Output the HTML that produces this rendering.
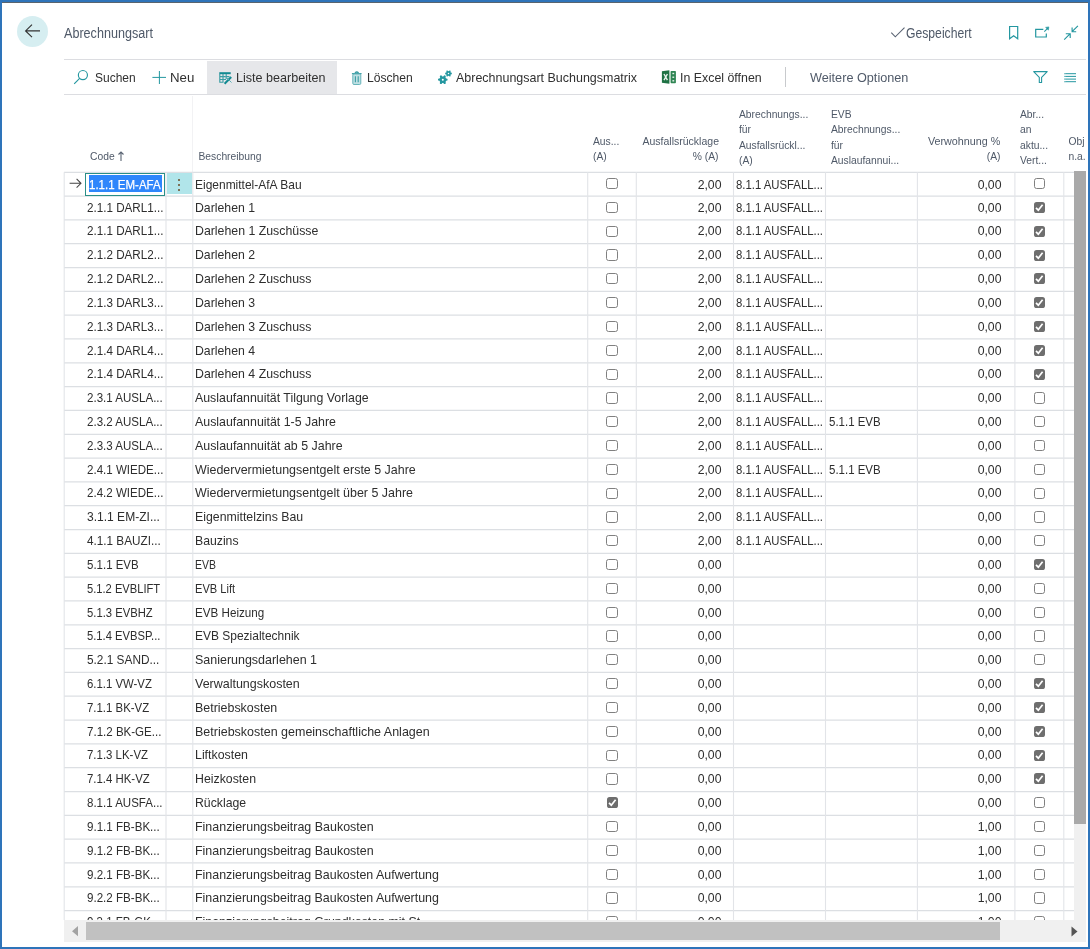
<!DOCTYPE html>
<html><head><meta charset="utf-8"><title>Abrechnungsart</title>
<style>
*{box-sizing:border-box;margin:0;padding:0}
html,body{width:1090px;height:949px;overflow:hidden;background:#fff;font-family:"Liberation Sans",sans-serif;}
.abs{position:absolute}
.page{position:absolute;left:0;top:0;width:1090px;height:949px;overflow:hidden;will-change:transform;background:#fff}
.frame{position:absolute;left:0;top:0;width:1090px;height:949px;border-style:solid;border-color:#2e74ba;border-width:2px 2.4px 2px 2px}
.frametop{position:absolute;left:2px;top:2px;width:1086px;height:1px;background:#22303e;opacity:.75}
.back{position:absolute;left:17px;top:15.7px;width:31.2px;height:31.2px;border-radius:50%;background:#d6eef1}
.title{position:absolute;color:#4f5968;line-height:16px;white-space:nowrap;transform-origin:left center}
.tbline{position:absolute;left:64px;width:1022px;height:1.3px;background:#dcdde1}
.tbtxt{position:absolute;color:#303030;line-height:16px;white-space:nowrap;transform-origin:left center}
.grid{position:absolute;left:0;top:0;width:1074px;height:920px;overflow:hidden}
.t{position:absolute;line-height:23.8px;color:#2e2e2e;white-space:nowrap;transform-origin:left center}
.cb{position:absolute;width:11.2px;height:11.2px;border:1.35px solid #808080;border-radius:2.6px;background:#fff}
.cb.on{width:11px;height:11px;background:#6e6e6e;border:none}
.cb svg{position:absolute;left:0;top:0}
.sel{position:absolute;left:85.3px;width:80px;height:22.8px;border:1.6px solid #2a8f88;background:#fff}
.selbg{position:absolute;left:88.6px;width:73.5px;height:17.4px;background:#2f86fb}
.dots{position:absolute;left:166.6px;width:25.8px;height:21.3px;background:#b1e5ea}
.dots i{position:absolute;left:11.7px;width:1.6px;height:1.6px;background:#7d7257}
.hd{position:absolute;font-size:10.3px;line-height:15.1px;color:#4f5968;white-space:nowrap}
.vsb{position:absolute;left:1074px;top:171.2px;width:11.8px;height:749px;background:#f0f0f0}
.vthumb{position:absolute;left:1074px;top:171.2px;width:11.8px;height:652.4px;background:#a9a9a9}
.hsb{position:absolute;left:63.8px;top:920.2px;width:1022px;height:21.9px;background:#f0f0f0}
.hthumb{position:absolute;left:86.3px;top:922px;width:914px;height:18.2px;background:#c1c1c1}
</style></head><body><div class="page">
<div class="back"></div>
<div class="tbline" style="top:59.2px"></div>
<div class="abs" style="left:206.8px;top:60.6px;width:130.4px;height:33.4px;background:#e6e7ea"></div>
<div class="tbline" style="top:93.9px"></div>
<div class="abs" style="left:785.2px;top:67.4px;width:1.2px;height:19.8px;background:#c8cacd"></div>
<div class="tbtxt" style="left:95.35px;top:69.90px;font-size:13.6px;transform:scaleX(0.8829);">Suchen</div>
<div class="tbtxt" style="left:170.01px;top:69.90px;font-size:13.6px;transform:scaleX(0.9769);">Neu</div>
<div class="tbtxt" style="left:235.97px;top:69.90px;font-size:13.6px;transform:scaleX(0.9242);">Liste bearbeiten</div>
<div class="tbtxt" style="left:367.30px;top:69.90px;font-size:13.6px;transform:scaleX(0.8924);">Löschen</div>
<div class="tbtxt" style="left:456.28px;top:69.90px;font-size:13.6px;transform:scaleX(0.9177);">Abrechnungsart Buchungsmatrix</div>
<div class="tbtxt" style="left:679.86px;top:69.90px;font-size:13.6px;transform:scaleX(0.9109);">In Excel öffnen</div>
<div class="tbtxt" style="left:809.74px;top:69.90px;font-size:13.6px;transform:scaleX(0.9324);color:#505a69">Weitere Optionen</div>
<div class="title" style="left:63.58px;top:25.60px;font-size:13.8px;transform:scaleX(0.9126);">Abrechnungsart</div>
<div class="title" style="left:906.39px;top:25.50px;font-size:13.8px;transform:scaleX(0.8830);">Gespeichert</div>

<div class="hd" style="left:90px;top:148.9px">Code</div>
<svg class="abs" style="left:117px;top:150.6px" width="8" height="11" fill="none"><path d="M4 1 V10 M1.5 3.5 L4 1 L6.5 3.5" stroke="#5a6473" stroke-width="1.1"/></svg>
<div class="hd" style="left:198.5px;top:148.9px">Beschreibung</div>
<div class="hd" style="left:593px;top:134.4px">Aus...<br>(A)</div>
<div class="hd" style="left:618.5px;width:100px;text-align:right;top:134.4px"><span style="display:inline-block;transform:scaleX(1.02);transform-origin:right center">Ausfallsrücklage</span><br>% (A)</div>
<div class="hd" style="left:739px;top:107.4px">Abrechnungs...<br>für<br>Ausfallsrückl...<br>(A)</div>
<div class="hd" style="left:831px;top:107.4px">EVB<br>Abrechnungs...<br>für<br>Auslaufannui...</div>
<div class="hd" style="left:900.5px;width:100px;text-align:right;top:134.4px"><span style="display:inline-block;transform:scaleX(1.045);transform-origin:right center">Verwohnung %</span><br>(A)</div>
<div class="hd" style="left:1020px;top:107.4px">Abr...<br>an<br>aktu...<br>Vert...</div>
<div class="hd" style="left:1068.5px;top:134.4px;width:17.5px;overflow:hidden">Obj<br>n.a.</div>
<div class="abs" style="left:192.2px;top:96.4px;width:1px;height:77px;background:#f2f2f4"></div>

<div class="grid">
<svg class="abs" style="left:0;top:0" width="1074" height="920"><g stroke="#dcdfe3" stroke-width="1.25" shape-rendering="geometricPrecision"><line x1="64" y1="172.26" x2="1074" y2="172.26"/><line x1="64" y1="196.08" x2="1074" y2="196.08"/><line x1="64" y1="219.89" x2="1074" y2="219.89"/><line x1="64" y1="243.71" x2="1074" y2="243.71"/><line x1="64" y1="267.53" x2="1074" y2="267.53"/><line x1="64" y1="291.35" x2="1074" y2="291.35"/><line x1="64" y1="315.16" x2="1074" y2="315.16"/><line x1="64" y1="338.98" x2="1074" y2="338.98"/><line x1="64" y1="362.80" x2="1074" y2="362.80"/><line x1="64" y1="386.61" x2="1074" y2="386.61"/><line x1="64" y1="410.43" x2="1074" y2="410.43"/><line x1="64" y1="434.25" x2="1074" y2="434.25"/><line x1="64" y1="458.06" x2="1074" y2="458.06"/><line x1="64" y1="481.88" x2="1074" y2="481.88"/><line x1="64" y1="505.70" x2="1074" y2="505.70"/><line x1="64" y1="529.51" x2="1074" y2="529.51"/><line x1="64" y1="553.33" x2="1074" y2="553.33"/><line x1="64" y1="577.15" x2="1074" y2="577.15"/><line x1="64" y1="600.97" x2="1074" y2="600.97"/><line x1="64" y1="624.78" x2="1074" y2="624.78"/><line x1="64" y1="648.60" x2="1074" y2="648.60"/><line x1="64" y1="672.42" x2="1074" y2="672.42"/><line x1="64" y1="696.23" x2="1074" y2="696.23"/><line x1="64" y1="720.05" x2="1074" y2="720.05"/><line x1="64" y1="743.87" x2="1074" y2="743.87"/><line x1="64" y1="767.68" x2="1074" y2="767.68"/><line x1="64" y1="791.50" x2="1074" y2="791.50"/><line x1="64" y1="815.32" x2="1074" y2="815.32"/><line x1="64" y1="839.14" x2="1074" y2="839.14"/><line x1="64" y1="862.95" x2="1074" y2="862.95"/><line x1="64" y1="886.77" x2="1074" y2="886.77"/><line x1="64" y1="910.59" x2="1074" y2="910.59"/><line x1="64" y1="934.40" x2="1074" y2="934.40"/></g><g stroke="#e2e4e8" stroke-width="1.1"><line x1="64.2" y1="172.26" x2="64.2" y2="920"/><line x1="166.0" y1="172.26" x2="166.0" y2="920"/><line x1="192.8" y1="172.26" x2="192.8" y2="920"/><line x1="587.7" y1="172.26" x2="587.7" y2="920"/><line x1="636.3" y1="172.26" x2="636.3" y2="920"/><line x1="733.5" y1="172.26" x2="733.5" y2="920"/><line x1="825.5" y1="172.26" x2="825.5" y2="920"/><line x1="917.4" y1="172.26" x2="917.4" y2="920"/><line x1="1014.9" y1="172.26" x2="1014.9" y2="920"/><line x1="1063.8" y1="172.26" x2="1063.8" y2="920"/></g></svg>
<div class="sel" style="top:172.96px"></div>
<div class="selbg" style="top:174.96px"></div>
<div class="t" style="left:89.02px;top:172.86px;font-size:13.6px;transform:scaleX(0.8465);color:#fff;-webkit-text-stroke:0.25px #fff">1.1.1 EM-AFA</div>
<div class="dots" style="top:172.96px"><i style="top:6.3px"></i><i style="top:11.2px"></i><i style="top:16.2px"></i></div>
<div class="t" style="left:195.30px;top:172.86px;font-size:13.6px;transform:scaleX(0.8814);">Eigenmittel-AfA Bau</div>
<div class="cb" style="left:606.40px;top:177.97px"></div>
<div class="t" style="left:694.71px;top:172.86px;width:26.47px;font-size:13.6px;text-align:right;transform-origin:right center;transform:scaleX(0.9004);">2,00</div>
<div class="t" style="left:736.01px;top:172.86px;font-size:13.6px;transform:scaleX(0.8337);">8.1.1 AUSFALL...</div>
<div class="t" style="left:975.01px;top:172.86px;width:26.47px;font-size:13.6px;text-align:right;transform-origin:right center;transform:scaleX(0.9004);">0,00</div>
<div class="cb" style="left:1033.90px;top:177.97px"></div>
<div class="t" style="left:87.01px;top:195.68px;font-size:13.6px;transform:scaleX(0.8570);">2.1.1 DARL1...</div>
<div class="t" style="left:195.30px;top:195.68px;font-size:13.6px;transform:scaleX(0.9027);">Darlehen 1</div>
<div class="cb" style="left:606.40px;top:201.79px"></div>
<div class="t" style="left:694.71px;top:195.68px;width:26.47px;font-size:13.6px;text-align:right;transform-origin:right center;transform:scaleX(0.9004);">2,00</div>
<div class="t" style="left:736.01px;top:195.68px;font-size:13.6px;transform:scaleX(0.8337);">8.1.1 AUSFALL...</div>
<div class="t" style="left:975.01px;top:195.68px;width:26.47px;font-size:13.6px;text-align:right;transform-origin:right center;transform:scaleX(0.9004);">0,00</div>
<div class="cb on" style="left:1034.00px;top:201.89px"><svg width="11" height="11" viewBox="0 0 11 11"><path d="M2 5.9 L4.3 8.2 L8.6 2.8" fill="none" stroke="#fff" stroke-width="1.7"/></svg></div>
<div class="t" style="left:87.01px;top:219.49px;font-size:13.6px;transform:scaleX(0.8570);">2.1.1 DARL1...</div>
<div class="t" style="left:195.30px;top:219.49px;font-size:13.6px;transform:scaleX(0.9068);">Darlehen 1 Zuschüsse</div>
<div class="cb" style="left:606.40px;top:225.60px"></div>
<div class="t" style="left:694.71px;top:219.49px;width:26.47px;font-size:13.6px;text-align:right;transform-origin:right center;transform:scaleX(0.9004);">2,00</div>
<div class="t" style="left:736.01px;top:219.49px;font-size:13.6px;transform:scaleX(0.8337);">8.1.1 AUSFALL...</div>
<div class="t" style="left:975.01px;top:219.49px;width:26.47px;font-size:13.6px;text-align:right;transform-origin:right center;transform:scaleX(0.9004);">0,00</div>
<div class="cb on" style="left:1034.00px;top:225.70px"><svg width="11" height="11" viewBox="0 0 11 11"><path d="M2 5.9 L4.3 8.2 L8.6 2.8" fill="none" stroke="#fff" stroke-width="1.7"/></svg></div>
<div class="t" style="left:87.01px;top:243.31px;font-size:13.6px;transform:scaleX(0.8570);">2.1.2 DARL2...</div>
<div class="t" style="left:195.30px;top:243.31px;font-size:13.6px;transform:scaleX(0.9027);">Darlehen 2</div>
<div class="cb" style="left:606.40px;top:249.42px"></div>
<div class="t" style="left:694.71px;top:243.31px;width:26.47px;font-size:13.6px;text-align:right;transform-origin:right center;transform:scaleX(0.9004);">2,00</div>
<div class="t" style="left:736.01px;top:243.31px;font-size:13.6px;transform:scaleX(0.8337);">8.1.1 AUSFALL...</div>
<div class="t" style="left:975.01px;top:243.31px;width:26.47px;font-size:13.6px;text-align:right;transform-origin:right center;transform:scaleX(0.9004);">0,00</div>
<div class="cb on" style="left:1034.00px;top:249.52px"><svg width="11" height="11" viewBox="0 0 11 11"><path d="M2 5.9 L4.3 8.2 L8.6 2.8" fill="none" stroke="#fff" stroke-width="1.7"/></svg></div>
<div class="t" style="left:87.01px;top:267.13px;font-size:13.6px;transform:scaleX(0.8570);">2.1.2 DARL2...</div>
<div class="t" style="left:195.30px;top:267.13px;font-size:13.6px;transform:scaleX(0.9054);">Darlehen 2 Zuschuss</div>
<div class="cb" style="left:606.40px;top:273.24px"></div>
<div class="t" style="left:694.71px;top:267.13px;width:26.47px;font-size:13.6px;text-align:right;transform-origin:right center;transform:scaleX(0.9004);">2,00</div>
<div class="t" style="left:736.01px;top:267.13px;font-size:13.6px;transform:scaleX(0.8337);">8.1.1 AUSFALL...</div>
<div class="t" style="left:975.01px;top:267.13px;width:26.47px;font-size:13.6px;text-align:right;transform-origin:right center;transform:scaleX(0.9004);">0,00</div>
<div class="cb on" style="left:1034.00px;top:273.34px"><svg width="11" height="11" viewBox="0 0 11 11"><path d="M2 5.9 L4.3 8.2 L8.6 2.8" fill="none" stroke="#fff" stroke-width="1.7"/></svg></div>
<div class="t" style="left:87.01px;top:290.95px;font-size:13.6px;transform:scaleX(0.8570);">2.1.3 DARL3...</div>
<div class="t" style="left:195.30px;top:290.95px;font-size:13.6px;transform:scaleX(0.9027);">Darlehen 3</div>
<div class="cb" style="left:606.40px;top:297.05px"></div>
<div class="t" style="left:694.71px;top:290.95px;width:26.47px;font-size:13.6px;text-align:right;transform-origin:right center;transform:scaleX(0.9004);">2,00</div>
<div class="t" style="left:736.01px;top:290.95px;font-size:13.6px;transform:scaleX(0.8337);">8.1.1 AUSFALL...</div>
<div class="t" style="left:975.01px;top:290.95px;width:26.47px;font-size:13.6px;text-align:right;transform-origin:right center;transform:scaleX(0.9004);">0,00</div>
<div class="cb on" style="left:1034.00px;top:297.15px"><svg width="11" height="11" viewBox="0 0 11 11"><path d="M2 5.9 L4.3 8.2 L8.6 2.8" fill="none" stroke="#fff" stroke-width="1.7"/></svg></div>
<div class="t" style="left:87.01px;top:314.76px;font-size:13.6px;transform:scaleX(0.8570);">2.1.3 DARL3...</div>
<div class="t" style="left:195.30px;top:314.76px;font-size:13.6px;transform:scaleX(0.9054);">Darlehen 3 Zuschuss</div>
<div class="cb" style="left:606.40px;top:320.87px"></div>
<div class="t" style="left:694.71px;top:314.76px;width:26.47px;font-size:13.6px;text-align:right;transform-origin:right center;transform:scaleX(0.9004);">2,00</div>
<div class="t" style="left:736.01px;top:314.76px;font-size:13.6px;transform:scaleX(0.8337);">8.1.1 AUSFALL...</div>
<div class="t" style="left:975.01px;top:314.76px;width:26.47px;font-size:13.6px;text-align:right;transform-origin:right center;transform:scaleX(0.9004);">0,00</div>
<div class="cb on" style="left:1034.00px;top:320.97px"><svg width="11" height="11" viewBox="0 0 11 11"><path d="M2 5.9 L4.3 8.2 L8.6 2.8" fill="none" stroke="#fff" stroke-width="1.7"/></svg></div>
<div class="t" style="left:87.01px;top:338.58px;font-size:13.6px;transform:scaleX(0.8570);">2.1.4 DARL4...</div>
<div class="t" style="left:195.30px;top:338.58px;font-size:13.6px;transform:scaleX(0.9027);">Darlehen 4</div>
<div class="cb" style="left:606.40px;top:344.69px"></div>
<div class="t" style="left:694.71px;top:338.58px;width:26.47px;font-size:13.6px;text-align:right;transform-origin:right center;transform:scaleX(0.9004);">2,00</div>
<div class="t" style="left:736.01px;top:338.58px;font-size:13.6px;transform:scaleX(0.8337);">8.1.1 AUSFALL...</div>
<div class="t" style="left:975.01px;top:338.58px;width:26.47px;font-size:13.6px;text-align:right;transform-origin:right center;transform:scaleX(0.9004);">0,00</div>
<div class="cb on" style="left:1034.00px;top:344.79px"><svg width="11" height="11" viewBox="0 0 11 11"><path d="M2 5.9 L4.3 8.2 L8.6 2.8" fill="none" stroke="#fff" stroke-width="1.7"/></svg></div>
<div class="t" style="left:87.01px;top:362.40px;font-size:13.6px;transform:scaleX(0.8570);">2.1.4 DARL4...</div>
<div class="t" style="left:195.30px;top:362.40px;font-size:13.6px;transform:scaleX(0.9054);">Darlehen 4 Zuschuss</div>
<div class="cb" style="left:606.40px;top:368.50px"></div>
<div class="t" style="left:694.71px;top:362.40px;width:26.47px;font-size:13.6px;text-align:right;transform-origin:right center;transform:scaleX(0.9004);">2,00</div>
<div class="t" style="left:736.01px;top:362.40px;font-size:13.6px;transform:scaleX(0.8337);">8.1.1 AUSFALL...</div>
<div class="t" style="left:975.01px;top:362.40px;width:26.47px;font-size:13.6px;text-align:right;transform-origin:right center;transform:scaleX(0.9004);">0,00</div>
<div class="cb on" style="left:1034.00px;top:368.60px"><svg width="11" height="11" viewBox="0 0 11 11"><path d="M2 5.9 L4.3 8.2 L8.6 2.8" fill="none" stroke="#fff" stroke-width="1.7"/></svg></div>
<div class="t" style="left:87.02px;top:386.21px;font-size:13.6px;transform:scaleX(0.8497);">2.3.1 AUSLA...</div>
<div class="t" style="left:195.30px;top:386.21px;font-size:13.6px;transform:scaleX(0.9081);">Auslaufannuität Tilgung Vorlage</div>
<div class="cb" style="left:606.40px;top:392.32px"></div>
<div class="t" style="left:694.71px;top:386.21px;width:26.47px;font-size:13.6px;text-align:right;transform-origin:right center;transform:scaleX(0.9004);">2,00</div>
<div class="t" style="left:736.01px;top:386.21px;font-size:13.6px;transform:scaleX(0.8337);">8.1.1 AUSFALL...</div>
<div class="t" style="left:975.01px;top:386.21px;width:26.47px;font-size:13.6px;text-align:right;transform-origin:right center;transform:scaleX(0.9004);">0,00</div>
<div class="cb" style="left:1033.90px;top:392.32px"></div>
<div class="t" style="left:87.02px;top:410.03px;font-size:13.6px;transform:scaleX(0.8497);">2.3.2 AUSLA...</div>
<div class="t" style="left:195.30px;top:410.03px;font-size:13.6px;transform:scaleX(0.9097);">Auslaufannuität 1-5 Jahre</div>
<div class="cb" style="left:606.40px;top:416.14px"></div>
<div class="t" style="left:694.71px;top:410.03px;width:26.47px;font-size:13.6px;text-align:right;transform-origin:right center;transform:scaleX(0.9004);">2,00</div>
<div class="t" style="left:736.01px;top:410.03px;font-size:13.6px;transform:scaleX(0.8337);">8.1.1 AUSFALL...</div>
<div class="t" style="left:828.50px;top:410.03px;font-size:13.6px;transform:scaleX(0.8439);">5.1.1 EVB</div>
<div class="t" style="left:975.01px;top:410.03px;width:26.47px;font-size:13.6px;text-align:right;transform-origin:right center;transform:scaleX(0.9004);">0,00</div>
<div class="cb" style="left:1033.90px;top:416.14px"></div>
<div class="t" style="left:87.02px;top:433.85px;font-size:13.6px;transform:scaleX(0.8497);">2.3.3 AUSLA...</div>
<div class="t" style="left:195.30px;top:433.85px;font-size:13.6px;transform:scaleX(0.9125);">Auslaufannuität ab 5 Jahre</div>
<div class="cb" style="left:606.40px;top:439.96px"></div>
<div class="t" style="left:694.71px;top:433.85px;width:26.47px;font-size:13.6px;text-align:right;transform-origin:right center;transform:scaleX(0.9004);">2,00</div>
<div class="t" style="left:736.01px;top:433.85px;font-size:13.6px;transform:scaleX(0.8337);">8.1.1 AUSFALL...</div>
<div class="t" style="left:975.01px;top:433.85px;width:26.47px;font-size:13.6px;text-align:right;transform-origin:right center;transform:scaleX(0.9004);">0,00</div>
<div class="cb" style="left:1033.90px;top:439.96px"></div>
<div class="t" style="left:87.02px;top:457.66px;font-size:13.6px;transform:scaleX(0.8499);">2.4.1 WIEDE...</div>
<div class="t" style="left:195.30px;top:457.66px;font-size:13.6px;transform:scaleX(0.9159);">Wiedervermietungsentgelt erste 5 Jahre</div>
<div class="cb" style="left:606.40px;top:463.77px"></div>
<div class="t" style="left:694.71px;top:457.66px;width:26.47px;font-size:13.6px;text-align:right;transform-origin:right center;transform:scaleX(0.9004);">2,00</div>
<div class="t" style="left:736.01px;top:457.66px;font-size:13.6px;transform:scaleX(0.8337);">8.1.1 AUSFALL...</div>
<div class="t" style="left:828.50px;top:457.66px;font-size:13.6px;transform:scaleX(0.8439);">5.1.1 EVB</div>
<div class="t" style="left:975.01px;top:457.66px;width:26.47px;font-size:13.6px;text-align:right;transform-origin:right center;transform:scaleX(0.9004);">0,00</div>
<div class="cb" style="left:1033.90px;top:463.77px"></div>
<div class="t" style="left:87.02px;top:481.48px;font-size:13.6px;transform:scaleX(0.8499);">2.4.2 WIEDE...</div>
<div class="t" style="left:195.30px;top:481.48px;font-size:13.6px;transform:scaleX(0.9157);">Wiedervermietungsentgelt über 5 Jahre</div>
<div class="cb" style="left:606.40px;top:487.59px"></div>
<div class="t" style="left:694.71px;top:481.48px;width:26.47px;font-size:13.6px;text-align:right;transform-origin:right center;transform:scaleX(0.9004);">2,00</div>
<div class="t" style="left:736.01px;top:481.48px;font-size:13.6px;transform:scaleX(0.8337);">8.1.1 AUSFALL...</div>
<div class="t" style="left:975.01px;top:481.48px;width:26.47px;font-size:13.6px;text-align:right;transform-origin:right center;transform:scaleX(0.9004);">0,00</div>
<div class="cb" style="left:1033.90px;top:487.59px"></div>
<div class="t" style="left:87.14px;top:505.30px;font-size:13.6px;transform:scaleX(0.8857);">3.1.1 EM-ZI...</div>
<div class="t" style="left:195.30px;top:505.30px;font-size:13.6px;transform:scaleX(0.9058);">Eigenmittelzins Bau</div>
<div class="cb" style="left:606.40px;top:511.41px"></div>
<div class="t" style="left:694.71px;top:505.30px;width:26.47px;font-size:13.6px;text-align:right;transform-origin:right center;transform:scaleX(0.9004);">2,00</div>
<div class="t" style="left:736.01px;top:505.30px;font-size:13.6px;transform:scaleX(0.8337);">8.1.1 AUSFALL...</div>
<div class="t" style="left:975.01px;top:505.30px;width:26.47px;font-size:13.6px;text-align:right;transform-origin:right center;transform:scaleX(0.9004);">0,00</div>
<div class="cb" style="left:1033.90px;top:511.41px"></div>
<div class="t" style="left:87.33px;top:529.12px;font-size:13.6px;transform:scaleX(0.8634);">4.1.1 BAUZI...</div>
<div class="t" style="left:195.30px;top:529.12px;font-size:13.6px;transform:scaleX(0.9005);">Bauzins</div>
<div class="cb" style="left:606.40px;top:535.22px"></div>
<div class="t" style="left:694.71px;top:529.12px;width:26.47px;font-size:13.6px;text-align:right;transform-origin:right center;transform:scaleX(0.9004);">2,00</div>
<div class="t" style="left:736.01px;top:529.12px;font-size:13.6px;transform:scaleX(0.8337);">8.1.1 AUSFALL...</div>
<div class="t" style="left:975.01px;top:529.12px;width:26.47px;font-size:13.6px;text-align:right;transform-origin:right center;transform:scaleX(0.9004);">0,00</div>
<div class="cb" style="left:1033.90px;top:535.22px"></div>
<div class="t" style="left:87.00px;top:552.93px;font-size:13.6px;transform:scaleX(0.8439);">5.1.1 EVB</div>
<div class="t" style="left:195.30px;top:552.93px;font-size:13.6px;transform:scaleX(0.7704);">EVB</div>
<div class="cb" style="left:606.40px;top:559.04px"></div>
<div class="t" style="left:694.71px;top:552.93px;width:26.47px;font-size:13.6px;text-align:right;transform-origin:right center;transform:scaleX(0.9004);">0,00</div>
<div class="t" style="left:975.01px;top:552.93px;width:26.47px;font-size:13.6px;text-align:right;transform-origin:right center;transform:scaleX(0.9004);">0,00</div>
<div class="cb on" style="left:1034.00px;top:559.14px"><svg width="11" height="11" viewBox="0 0 11 11"><path d="M2 5.9 L4.3 8.2 L8.6 2.8" fill="none" stroke="#fff" stroke-width="1.7"/></svg></div>
<div class="t" style="left:87.00px;top:576.75px;font-size:13.6px;transform:scaleX(0.8209);">5.1.2 EVBLIFT</div>
<div class="t" style="left:195.30px;top:576.75px;font-size:13.6px;transform:scaleX(0.8163);">EVB Lift</div>
<div class="cb" style="left:606.40px;top:582.86px"></div>
<div class="t" style="left:694.71px;top:576.75px;width:26.47px;font-size:13.6px;text-align:right;transform-origin:right center;transform:scaleX(0.9004);">0,00</div>
<div class="t" style="left:975.01px;top:576.75px;width:26.47px;font-size:13.6px;text-align:right;transform-origin:right center;transform:scaleX(0.9004);">0,00</div>
<div class="cb" style="left:1033.90px;top:582.86px"></div>
<div class="t" style="left:87.00px;top:600.57px;font-size:13.6px;transform:scaleX(0.8271);">5.1.3 EVBHZ</div>
<div class="t" style="left:195.30px;top:600.57px;font-size:13.6px;transform:scaleX(0.8567);">EVB Heizung</div>
<div class="cb" style="left:606.40px;top:606.67px"></div>
<div class="t" style="left:694.71px;top:600.57px;width:26.47px;font-size:13.6px;text-align:right;transform-origin:right center;transform:scaleX(0.9004);">0,00</div>
<div class="t" style="left:975.01px;top:600.57px;width:26.47px;font-size:13.6px;text-align:right;transform-origin:right center;transform:scaleX(0.9004);">0,00</div>
<div class="cb" style="left:1033.90px;top:606.67px"></div>
<div class="t" style="left:87.15px;top:624.38px;font-size:13.6px;transform:scaleX(0.8254);">5.1.4 EVBSP...</div>
<div class="t" style="left:195.30px;top:624.38px;font-size:13.6px;transform:scaleX(0.8812);">EVB Spezialtechnik</div>
<div class="cb" style="left:606.40px;top:630.49px"></div>
<div class="t" style="left:694.71px;top:624.38px;width:26.47px;font-size:13.6px;text-align:right;transform-origin:right center;transform:scaleX(0.9004);">0,00</div>
<div class="t" style="left:975.01px;top:624.38px;width:26.47px;font-size:13.6px;text-align:right;transform-origin:right center;transform:scaleX(0.9004);">0,00</div>
<div class="cb" style="left:1033.90px;top:630.49px"></div>
<div class="t" style="left:87.13px;top:648.20px;font-size:13.6px;transform:scaleX(0.8702);">5.2.1 SAND...</div>
<div class="t" style="left:195.30px;top:648.20px;font-size:13.6px;transform:scaleX(0.9175);">Sanierungsdarlehen 1</div>
<div class="cb" style="left:606.40px;top:654.31px"></div>
<div class="t" style="left:694.71px;top:648.20px;width:26.47px;font-size:13.6px;text-align:right;transform-origin:right center;transform:scaleX(0.9004);">0,00</div>
<div class="t" style="left:975.01px;top:648.20px;width:26.47px;font-size:13.6px;text-align:right;transform-origin:right center;transform:scaleX(0.9004);">0,00</div>
<div class="cb" style="left:1033.90px;top:654.31px"></div>
<div class="t" style="left:87.00px;top:672.02px;font-size:13.6px;transform:scaleX(0.8360);">6.1.1 VW-VZ</div>
<div class="t" style="left:195.30px;top:672.02px;font-size:13.6px;transform:scaleX(0.9178);">Verwaltungskosten</div>
<div class="cb" style="left:606.40px;top:678.13px"></div>
<div class="t" style="left:694.71px;top:672.02px;width:26.47px;font-size:13.6px;text-align:right;transform-origin:right center;transform:scaleX(0.9004);">0,00</div>
<div class="t" style="left:975.01px;top:672.02px;width:26.47px;font-size:13.6px;text-align:right;transform-origin:right center;transform:scaleX(0.9004);">0,00</div>
<div class="cb on" style="left:1034.00px;top:678.23px"><svg width="11" height="11" viewBox="0 0 11 11"><path d="M2 5.9 L4.3 8.2 L8.6 2.8" fill="none" stroke="#fff" stroke-width="1.7"/></svg></div>
<div class="t" style="left:87.00px;top:695.83px;font-size:13.6px;transform:scaleX(0.8393);">7.1.1 BK-VZ</div>
<div class="t" style="left:195.30px;top:695.83px;font-size:13.6px;transform:scaleX(0.9143);">Betriebskosten</div>
<div class="cb" style="left:606.40px;top:701.94px"></div>
<div class="t" style="left:694.71px;top:695.83px;width:26.47px;font-size:13.6px;text-align:right;transform-origin:right center;transform:scaleX(0.9004);">0,00</div>
<div class="t" style="left:975.01px;top:695.83px;width:26.47px;font-size:13.6px;text-align:right;transform-origin:right center;transform:scaleX(0.9004);">0,00</div>
<div class="cb on" style="left:1034.00px;top:702.04px"><svg width="11" height="11" viewBox="0 0 11 11"><path d="M2 5.9 L4.3 8.2 L8.6 2.8" fill="none" stroke="#fff" stroke-width="1.7"/></svg></div>
<div class="t" style="left:87.01px;top:719.65px;font-size:13.6px;transform:scaleX(0.8490);">7.1.2 BK-GE...</div>
<div class="t" style="left:195.30px;top:719.65px;font-size:13.6px;transform:scaleX(0.9188);">Betriebskosten gemeinschaftliche Anlagen</div>
<div class="cb" style="left:606.40px;top:725.76px"></div>
<div class="t" style="left:694.71px;top:719.65px;width:26.47px;font-size:13.6px;text-align:right;transform-origin:right center;transform:scaleX(0.9004);">0,00</div>
<div class="t" style="left:975.01px;top:719.65px;width:26.47px;font-size:13.6px;text-align:right;transform-origin:right center;transform:scaleX(0.9004);">0,00</div>
<div class="cb on" style="left:1034.00px;top:725.86px"><svg width="11" height="11" viewBox="0 0 11 11"><path d="M2 5.9 L4.3 8.2 L8.6 2.8" fill="none" stroke="#fff" stroke-width="1.7"/></svg></div>
<div class="t" style="left:87.00px;top:743.47px;font-size:13.6px;transform:scaleX(0.8407);">7.1.3 LK-VZ</div>
<div class="t" style="left:195.30px;top:743.47px;font-size:13.6px;transform:scaleX(0.9097);">Liftkosten</div>
<div class="cb" style="left:606.40px;top:749.58px"></div>
<div class="t" style="left:694.71px;top:743.47px;width:26.47px;font-size:13.6px;text-align:right;transform-origin:right center;transform:scaleX(0.9004);">0,00</div>
<div class="t" style="left:975.01px;top:743.47px;width:26.47px;font-size:13.6px;text-align:right;transform-origin:right center;transform:scaleX(0.9004);">0,00</div>
<div class="cb on" style="left:1034.00px;top:749.68px"><svg width="11" height="11" viewBox="0 0 11 11"><path d="M2 5.9 L4.3 8.2 L8.6 2.8" fill="none" stroke="#fff" stroke-width="1.7"/></svg></div>
<div class="t" style="left:87.00px;top:767.28px;font-size:13.6px;transform:scaleX(0.8386);">7.1.4 HK-VZ</div>
<div class="t" style="left:195.30px;top:767.28px;font-size:13.6px;transform:scaleX(0.9071);">Heizkosten</div>
<div class="cb" style="left:606.40px;top:773.39px"></div>
<div class="t" style="left:694.71px;top:767.28px;width:26.47px;font-size:13.6px;text-align:right;transform-origin:right center;transform:scaleX(0.9004);">0,00</div>
<div class="t" style="left:975.01px;top:767.28px;width:26.47px;font-size:13.6px;text-align:right;transform-origin:right center;transform:scaleX(0.9004);">0,00</div>
<div class="cb on" style="left:1034.00px;top:773.49px"><svg width="11" height="11" viewBox="0 0 11 11"><path d="M2 5.9 L4.3 8.2 L8.6 2.8" fill="none" stroke="#fff" stroke-width="1.7"/></svg></div>
<div class="t" style="left:87.10px;top:791.10px;font-size:13.6px;transform:scaleX(0.8473);">8.1.1 AUSFA...</div>
<div class="t" style="left:195.30px;top:791.10px;font-size:13.6px;transform:scaleX(0.9027);">Rücklage</div>
<div class="cb on" style="left:606.50px;top:797.31px"><svg width="11" height="11" viewBox="0 0 11 11"><path d="M2 5.9 L4.3 8.2 L8.6 2.8" fill="none" stroke="#fff" stroke-width="1.7"/></svg></div>
<div class="t" style="left:694.71px;top:791.10px;width:26.47px;font-size:13.6px;text-align:right;transform-origin:right center;transform:scaleX(0.9004);">0,00</div>
<div class="t" style="left:975.01px;top:791.10px;width:26.47px;font-size:13.6px;text-align:right;transform-origin:right center;transform:scaleX(0.9004);">0,00</div>
<div class="cb" style="left:1033.90px;top:797.21px"></div>
<div class="t" style="left:87.06px;top:814.92px;font-size:13.6px;transform:scaleX(0.8524);">9.1.1 FB-BK...</div>
<div class="t" style="left:195.30px;top:814.92px;font-size:13.6px;transform:scaleX(0.9160);">Finanzierungsbeitrag Baukosten</div>
<div class="cb" style="left:606.40px;top:821.03px"></div>
<div class="t" style="left:694.71px;top:814.92px;width:26.47px;font-size:13.6px;text-align:right;transform-origin:right center;transform:scaleX(0.9004);">0,00</div>
<div class="t" style="left:975.01px;top:814.92px;width:26.47px;font-size:13.6px;text-align:right;transform-origin:right center;transform:scaleX(0.9004);">1,00</div>
<div class="cb" style="left:1033.90px;top:821.03px"></div>
<div class="t" style="left:87.06px;top:838.74px;font-size:13.6px;transform:scaleX(0.8524);">9.1.2 FB-BK...</div>
<div class="t" style="left:195.30px;top:838.74px;font-size:13.6px;transform:scaleX(0.9160);">Finanzierungsbeitrag Baukosten</div>
<div class="cb" style="left:606.40px;top:844.84px"></div>
<div class="t" style="left:694.71px;top:838.74px;width:26.47px;font-size:13.6px;text-align:right;transform-origin:right center;transform:scaleX(0.9004);">0,00</div>
<div class="t" style="left:975.01px;top:838.74px;width:26.47px;font-size:13.6px;text-align:right;transform-origin:right center;transform:scaleX(0.9004);">1,00</div>
<div class="cb" style="left:1033.90px;top:844.84px"></div>
<div class="t" style="left:87.06px;top:862.55px;font-size:13.6px;transform:scaleX(0.8524);">9.2.1 FB-BK...</div>
<div class="t" style="left:195.30px;top:862.55px;font-size:13.6px;transform:scaleX(0.9143);">Finanzierungsbeitrag Baukosten Aufwertung</div>
<div class="cb" style="left:606.40px;top:868.66px"></div>
<div class="t" style="left:694.71px;top:862.55px;width:26.47px;font-size:13.6px;text-align:right;transform-origin:right center;transform:scaleX(0.9004);">0,00</div>
<div class="t" style="left:975.01px;top:862.55px;width:26.47px;font-size:13.6px;text-align:right;transform-origin:right center;transform:scaleX(0.9004);">1,00</div>
<div class="cb" style="left:1033.90px;top:868.66px"></div>
<div class="t" style="left:87.06px;top:886.37px;font-size:13.6px;transform:scaleX(0.8524);">9.2.2 FB-BK...</div>
<div class="t" style="left:195.30px;top:886.37px;font-size:13.6px;transform:scaleX(0.9143);">Finanzierungsbeitrag Baukosten Aufwertung</div>
<div class="cb" style="left:606.40px;top:892.48px"></div>
<div class="t" style="left:694.71px;top:886.37px;width:26.47px;font-size:13.6px;text-align:right;transform-origin:right center;transform:scaleX(0.9004);">0,00</div>
<div class="t" style="left:975.01px;top:886.37px;width:26.47px;font-size:13.6px;text-align:right;transform-origin:right center;transform:scaleX(0.9004);">1,00</div>
<div class="cb" style="left:1033.90px;top:892.48px"></div>
<div class="t" style="left:87.06px;top:910.19px;font-size:13.6px;transform:scaleX(0.8455);">9.3.1 FB-GK...</div>
<div class="t" style="left:195.30px;top:910.19px;font-size:13.6px;transform:scaleX(0.9114);">Finanzierungsbeitrag Grundkosten mit St...</div>
<div class="cb" style="left:606.40px;top:916.30px"></div>
<div class="t" style="left:694.71px;top:910.19px;width:26.47px;font-size:13.6px;text-align:right;transform-origin:right center;transform:scaleX(0.9004);">0,00</div>
<div class="t" style="left:975.01px;top:910.19px;width:26.47px;font-size:13.6px;text-align:right;transform-origin:right center;transform:scaleX(0.9004);">1,00</div>
<div class="cb" style="left:1033.90px;top:916.30px"></div>
</div>
<div class="vsb"></div>
<div class="vthumb"></div>
<div class="hsb"></div>
<div class="hthumb"></div>
<svg class="abs" style="left:0;top:0" width="1090" height="949" fill="none">
<!-- row arrow -->
<path d="M69.6 183.3 H81 M76.6 178.9 L81 183.3 L76.6 187.7" stroke="#444" stroke-width="1.05"/>
<!-- back arrow -->
<path d="M25.6 30.9 H40 M32 24.6 L25.6 30.9 L32 37.2" stroke="#333" stroke-width="1.15"/>
<!-- check -->
<path d="M891.3 32.6 L895.3 36.8 L904.5 27.6" stroke="#5a6473" stroke-width="1.1"/>
<!-- bookmark -->
<path d="M1009.6 26.5 H1017.7 V38.8 L1013.65 35.8 L1009.6 38.8 Z" stroke="#2497a0" stroke-width="1.2"/>
<!-- popout -->
<path d="M1043.3 29.3 H1035.7 V37 H1046.3 V33.5" stroke="#2497a0" stroke-width="1.2"/>
<path d="M1044.3 31.7 L1047.8 28.2" stroke="#2497a0" stroke-width="1.1"/>
<path d="M1045.6 27.4 L1048.8 26.9 L1048.4 30.1 Z" fill="#2497a0" stroke="#2497a0" stroke-width="0.6"/>
<!-- collapse -->
<path d="M1077.9 25.9 L1072.1 31.7 M1072.1 27.6 V31.7 H1076.2 M1064.2 39.7 L1070.2 33.7 M1065.8 33.7 H1070.2 V38" stroke="#2497a0" stroke-width="1.15"/>
<!-- search -->
<circle cx="82.9" cy="75.1" r="4.55" stroke="#2497a0" stroke-width="1.15"/>
<path d="M79.6 78.4 L74.2 83.8" stroke="#2497a0" stroke-width="1.15"/>
<!-- plus -->
<path d="M159.4 71 V84 M152.4 77.4 H166" stroke="#2497a0" stroke-width="1"/>
<!-- liste bearbeiten -->
<g>
<rect x="219.3" y="72.2" width="11.4" height="2" fill="#138a92"/>
<path d="M219.8 74 V82.5 M223 74 V82.5 M226.2 74 V79 M219.3 76.6 H229.5 M219.3 79.5 H226 M219.3 82.2 H223.5" stroke="#3a9da4" stroke-width="1.15"/>
<path d="M224.6 83.8 L231.2 77" stroke="#138a92" stroke-width="2"/>
<path d="M225.5 76.5 L231.5 82.5" stroke="#5aaeb4" stroke-width="1"/>
</g>
<!-- trash -->
<path d="M351.9 73.7 H361.6" stroke="#3a9da4" stroke-width="1.3"/>
<path d="M355 73.2 Q356.8 70.8 358.6 73.2" stroke="#3a9da4" stroke-width="1.3"/>
<rect x="352.8" y="74" width="8" height="10.5" rx="1.2" fill="#bfe0e3" stroke="#5aaeb4" stroke-width="0.9"/>
<path d="M355.4 76.2 V82.2 M358.2 76.2 V82.2" stroke="#3a9da4" stroke-width="1.1"/>
<!-- gears -->
<circle cx="442.8" cy="79.7" r="3.3" fill="#2497a0"/><path d="M439.10 79.70 L446.50 79.70 M440.95 76.50 L444.65 82.90 M444.65 76.50 L440.95 82.90 " stroke="#2497a0" stroke-width="2.3" stroke-linecap="round"/><circle cx="442.8" cy="79.7" r="1.0" fill="#fff"/>
<circle cx="448.5" cy="73.5" r="2.3" fill="#2497a0"/><path d="M446.00 73.50 L451.00 73.50 M447.25 71.33 L449.75 75.67 M449.75 71.33 L447.25 75.67 " stroke="#2497a0" stroke-width="1.8" stroke-linecap="round"/><circle cx="448.5" cy="73.5" r="0.75" fill="#fff"/>
<!-- excel -->
<path d="M661.9 71.2 L669.4 70.2 V83.8 L661.9 82.8 Z" fill="#1f7244"/>
<rect x="670.6" y="70.9" width="5.3" height="12.4" rx="0.8" fill="#2f8553"/>
<path d="M664 74 L667.4 80.2 M667.4 74 L664 80.2" stroke="#e8f2ec" stroke-width="1.4"/>
<g fill="#e8f2ec"><rect x="672.4" y="72.8" width="1.8" height="1.4"/><rect x="672.4" y="76.5" width="1.8" height="1.4"/><rect x="672.4" y="80.1" width="1.8" height="1.4"/></g>
<!-- filter -->
<path d="M1033.7 71.6 H1047.2 L1041.6 77.3 V82.5 H1039.3 V77.3 Z" stroke="#2497a0" stroke-width="1.1" stroke-linejoin="round"/>
<!-- list -->
<path d="M1064 73.7 H1076 M1064 76.4 H1076 M1064 79.1 H1076 M1064 81.7 H1076" stroke="#2497a0" stroke-width="1"/>
<path d="M1064 73.7 H1065.5 M1064 76.4 H1065.5 M1064 79.1 H1065.5 M1064 81.7 H1065.5" stroke="#fff" stroke-width="1.2" opacity="0.35"/>
<!-- scroll arrows -->
<path d="M78 926.1 L72 931.2 L78 936.3 Z" fill="#a3a3a3"/>
<path d="M1071.5 926.5 L1077.5 931.5 L1071.5 936.5 Z" fill="#555"/>
</svg>
<div class="frame"></div>
<div class="frametop"></div>
</div></body></html>
